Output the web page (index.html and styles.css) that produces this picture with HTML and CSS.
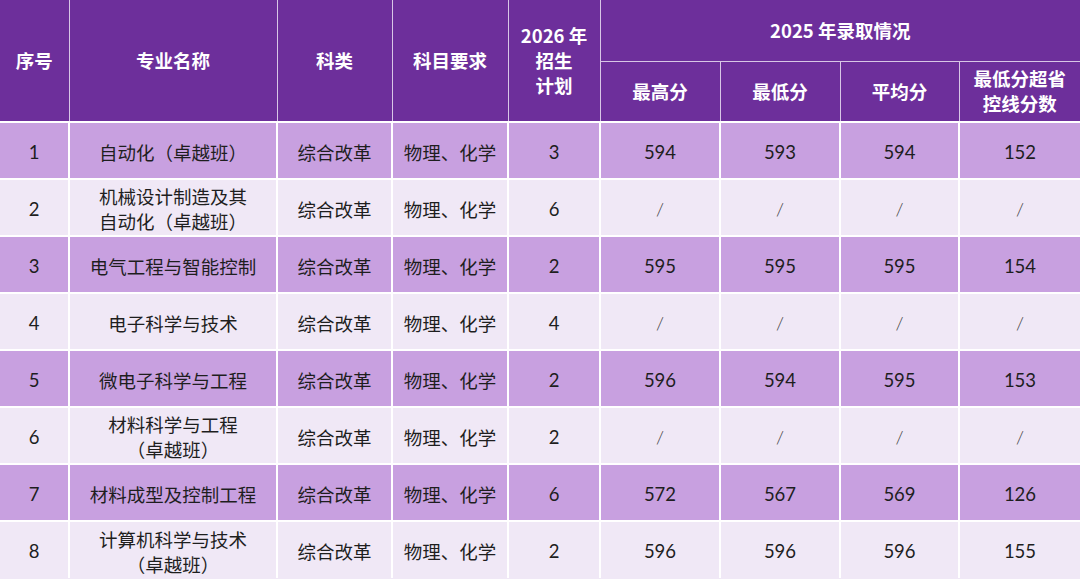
FILE: index.html
```html
<!DOCTYPE html>
<html lang="zh">
<head>
<meta charset="utf-8">
<link rel="stylesheet" href="styles.css">
</head>
<body>
<table class="tbl">
  <colgroup>
    <col class="c1"><col class="c2"><col class="c3"><col class="c4"><col class="c5">
    <col class="c6"><col class="c7"><col class="c8"><col class="c9">
  </colgroup>
  <thead>
    <tr class="h1">
      <th rowspan="2">序号</th>
      <th rowspan="2">专业名称</th>
      <th rowspan="2">科类</th>
      <th rowspan="2">科目要求</th>
      <th rowspan="2">2026 年<br>招生<br>计划</th>
      <th colspan="4">2025 年录取情况</th>
    </tr>
    <tr class="h2">
      <th>最高分</th>
      <th>最低分</th>
      <th>平均分</th>
      <th>最低分超省<br>控线分数</th>
    </tr>
  </thead>
  <tbody>
    <tr class="odd"><td class="num">1</td><td>自动化（卓越班）</td><td>综合改革</td><td>物理、化学</td><td class="num">3</td><td class="num">594</td><td class="num">593</td><td class="num">594</td><td class="num">152</td></tr>
    <tr class="even"><td class="num">2</td><td>机械设计制造及其<br>自动化（卓越班）</td><td>综合改革</td><td>物理、化学</td><td class="num">6</td><td class="num sl">/</td><td class="num sl">/</td><td class="num sl">/</td><td class="num sl">/</td></tr>
    <tr class="odd"><td class="num">3</td><td>电气工程与智能控制</td><td>综合改革</td><td>物理、化学</td><td class="num">2</td><td class="num">595</td><td class="num">595</td><td class="num">595</td><td class="num">154</td></tr>
    <tr class="even"><td class="num">4</td><td>电子科学与技术</td><td>综合改革</td><td>物理、化学</td><td class="num">4</td><td class="num sl">/</td><td class="num sl">/</td><td class="num sl">/</td><td class="num sl">/</td></tr>
    <tr class="odd"><td class="num">5</td><td>微电子科学与工程</td><td>综合改革</td><td>物理、化学</td><td class="num">2</td><td class="num">596</td><td class="num">594</td><td class="num">595</td><td class="num">153</td></tr>
    <tr class="even"><td class="num">6</td><td>材料科学与工程<br>（卓越班）</td><td>综合改革</td><td>物理、化学</td><td class="num">2</td><td class="num sl">/</td><td class="num sl">/</td><td class="num sl">/</td><td class="num sl">/</td></tr>
    <tr class="odd"><td class="num">7</td><td>材料成型及控制工程</td><td>综合改革</td><td>物理、化学</td><td class="num">6</td><td class="num">572</td><td class="num">567</td><td class="num">569</td><td class="num">126</td></tr>
    <tr class="even last"><td class="num">8</td><td>计算机科学与技术<br>（卓越班）</td><td>综合改革</td><td>物理、化学</td><td class="num">2</td><td class="num">596</td><td class="num">596</td><td class="num">596</td><td class="num">155</td></tr>
  </tbody>
</table>
</body>
</html>
```
FILE: styles.css
```css
html, body {
  margin: 0;
  padding: 0;
  background: #f0e8f6;
}
.tbl {
  width: 1080px;
  table-layout: fixed;
  border-collapse: collapse;
  border-style: hidden;
  font-family: "Noto Sans CJK SC", "Noto Sans", sans-serif;
}
.c1 { width: 69px; }
.c2 { width: 208px; }
.c3 { width: 115px; }
.c4 { width: 116px; }
.c5 { width: 92px; }
.c6 { width: 120px; }
.c7 { width: 120px; }
.c8 { width: 119px; }
.c9 { width: 121px; }
th, td {
  border: 2px solid #ffffff;
  text-align: center;
  vertical-align: middle;
  padding: 0;
}
th {
  background: #6d2f9b;
  color: #ffffff;
  font-size: 18.5px;
  font-weight: 700;
  line-height: 25px;
  border-color: #d8c6e6;
  border-width: 1px;
}
.h1 { height: 61px; }
.h2 { height: 61px; }
td {
  font-size: 18.5px;
  color: #1e1e1e;
  line-height: 25px;
  height: 52px;
  padding-top: 3px;
}
.odd td { background: #c8a0e0; }
.even td { background: #f0e8f6; }
.num {
  font-family: "Lato", "Noto Sans CJK SC", sans-serif;
  font-size: 18.5px;
}
.sl {
  color: #444;
  font-weight: 300;
}
.last td { height: 53px; }
```
